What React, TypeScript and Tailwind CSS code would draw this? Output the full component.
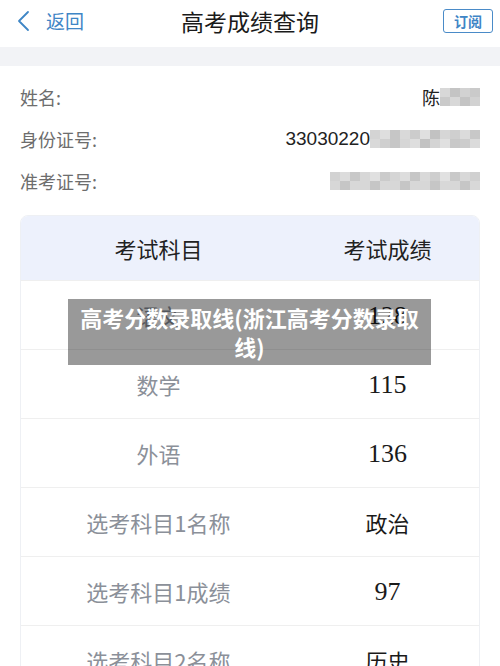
import React from "react";

const cjk = { fontFamily: '"Noto Sans CJK SC", "Noto Sans", sans-serif' };
const serifNum = { fontFamily: '"Liberation Serif", "Noto Sans CJK SC", serif' };

// pixelated mosaic used to hide personal data
function Mosaic({ shades }: { shades: string[] }) {
  return (
    <div className="flex h-[18px] blur-[0.5px]">
      {shades.map((c, i) => (
        <div key={i} className="h-full w-[10px] flex flex-col">
          <div className="flex-1" style={{ backgroundColor: c }} />
          <div className="flex-1" style={{ backgroundColor: shades[(i * 5 + 3) % shades.length] }} />
        </div>
      ))}
    </div>
  );
}

const rows = [
  { subject: "语文", score: "128" },
  { subject: "数学", score: "115" },
  { subject: "外语", score: "136" },
  { subject: "选考科目1名称", score: "政治" },
  { subject: "选考科目1成绩", score: "97" },
  { subject: "选考科目2名称", score: "历史" },
];

export default function App() {
  return (
    <div className="w-[500px] h-[666px] overflow-hidden bg-white relative" style={cjk}>
      {/* top bar */}
      <div className="h-[47px] flex items-center px-[16px] pb-[6px] relative">
        <svg width="16" height="22" viewBox="0 0 16 22" className="shrink-0">
          <path d="M12 2 L3 11 L12 20" fill="none" stroke="#3f86c6" strokeWidth="1.8" strokeLinecap="round" strokeLinejoin="round" />
        </svg>
        <span className="ml-[14px] text-[19px] text-[#3f86c6] leading-none">返回</span>
        <div className="absolute left-0 right-0 top-[8px] text-center text-[23px] text-[#1a1a1a] leading-[26px] pointer-events-none">
          高考成绩查询
        </div>
        <div className="ml-auto mr-[-9px] border-[1.5px] border-[#4a8bc8] rounded-[3px] w-[50px] h-[24px] flex items-center justify-center text-[14px] font-bold text-[#3f86c6] leading-none">
          订阅
        </div>
      </div>
      <div className="h-[19px] bg-[#f2f3f6]" />

      {/* personal info */}
      <div className="px-[20px] pt-[10px] text-[18px]">
        <div className="h-[42px] flex items-center justify-between">
          <span className="text-[#6d6d6d]">姓名:</span>
          <div className="flex items-center">
            <span className="text-[#222]">陈</span>
            <Mosaic shades={["#d8d8d8", "#c4c4c4", "#d2d2d2", "#cacaca"]} />
          </div>
        </div>
        <div className="h-[42px] flex items-center justify-between">
          <span className="text-[#6d6d6d]">身份证号:</span>
          <div className="flex items-center">
            <span className="text-[#222] text-[19px]" style={{ fontFamily: '"Liberation Sans", sans-serif' }}>
              33030220
            </span>
            <Mosaic shades={["#d4d4d4", "#dedede", "#c6c6c6", "#d9d9d9", "#cccccc", "#e0e0e0", "#c2c2c2", "#d6d6d6", "#cfcfcf", "#dbdbdb", "#c8c8c8"]} />
          </div>
        </div>
        <div className="h-[42px] flex items-center justify-between">
          <span className="text-[#6d6d6d]">准考证号:</span>
          <Mosaic shades={["#d2d2d2", "#dcdcdc", "#c8c8c8", "#d7d7d7", "#e0e0e0", "#cbcbcb", "#d5d5d5", "#dddddd", "#c6c6c6", "#d9d9d9", "#cecece", "#e1e1e1", "#c9c9c9", "#d8d8d8", "#d0d0d0"]} />
        </div>
      </div>

      {/* score table */}
      <div className="mx-[20px] mt-[13px] border border-[#eef0f4] rounded-t-[8px] overflow-hidden">
        <div className="h-[64px] flex items-center bg-[#edf1fc] text-[22px] text-[#222]">
          <div className="w-[60%] text-center">考试科目</div>
          <div className="w-[40%] text-center">考试成绩</div>
        </div>
        {rows.map((r) => {
          const numeric = /^\d+$/.test(r.score);
          return (
            <div key={r.subject} className="h-[69px] flex items-center border-t border-[#efefef]">
              <div className="w-[60%] text-center text-[22px] text-[#8b9099]">{r.subject}</div>
              {numeric ? (
                <div className="w-[40%] text-center text-[26px] text-[#1a1a1a]" style={serifNum}>
                  {r.score}
                </div>
              ) : (
                <div className="w-[40%] text-center text-[22px] text-[#1a1a1a]">{r.score}</div>
              )}
            </div>
          );
        })}
      </div>

      {/* caption overlay */}
      <div className="absolute left-[68px] top-[299px] w-[363px] h-[66px] bg-black/40 flex items-center justify-center px-[6px]">
        <p className="max-w-[350px] text-white text-[22px] font-bold leading-[29px] text-center">
          高考分数录取线(浙江高考分数录取线)
        </p>
      </div>
    </div>
  );
}
